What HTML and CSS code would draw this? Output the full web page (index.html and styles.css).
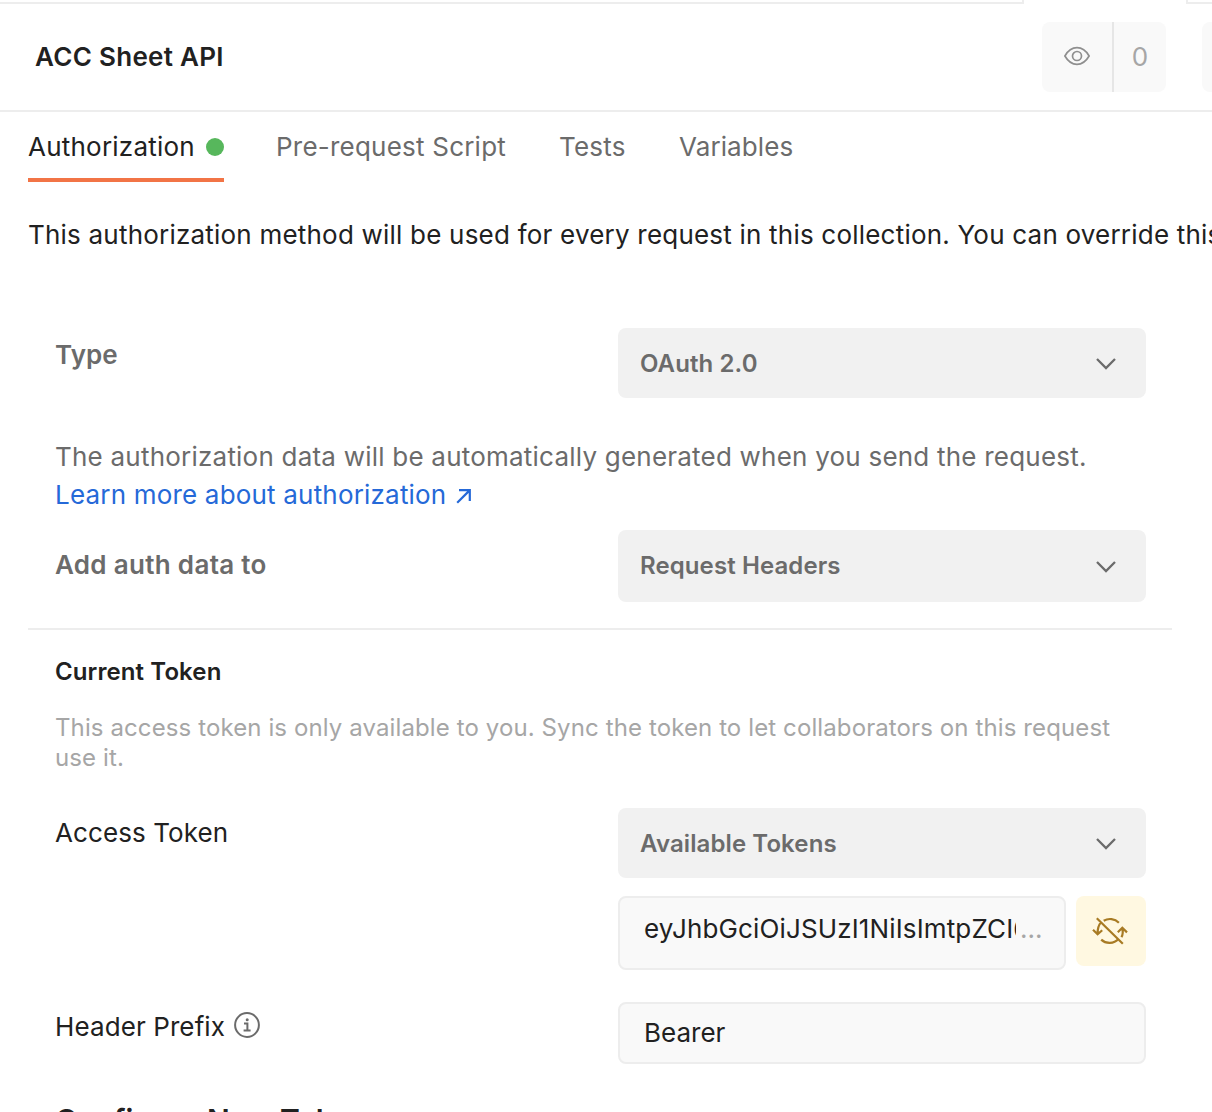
FILE: index.html
```html
<!DOCTYPE html>
<html lang="en">
<head>
<meta charset="utf-8">
<title>ACC Sheet API</title>
<link rel="stylesheet" href="styles.css">
</head>
<body>
<div class="tabstrip"><div class="strip-left"></div><div class="strip-right"></div></div>
<header class="header">
  <h1 class="title">ACC Sheet API</h1>
  <div class="actions">
    <div class="group">
      <div class="watch">
        <svg width="28" height="20" viewBox="0 0 28 20" fill="none" stroke="#8f8f8f" stroke-width="1.7"><path d="M1.9 10C5 4.6 9.200 1.700 14 1.700S23 4.600 26.100 10C23 15.400 18.800 18.300 14 18.300S5 15.400 1.900 10Z"/><circle cx="14" cy="10" r="4.500"/></svg>
      </div>
      <div class="count">0</div>
    </div>
    <div class="next-action"></div>
  </div>
</header>
<nav class="tabs">
  <div class="tab active"><span>Authorization</span><i class="dot"></i></div>
  <div class="tab t-pre">Pre-request Script</div>
  <div class="tab t-tests">Tests</div>
  <div class="tab t-vars">Variables</div>
</nav>
<p class="intro">This authorization method will be used for every request in this collection. You can override this</p>
<main class="form">
  <div class="row row-type">
    <div class="label bold l-type">Type</div>
    <div class="select"><span>OAuth 2.0</span><svg class="chev" width="22" height="14" viewBox="0 0 22 14"><path d="M2 2 11 11 20 2"/></svg></div>
  </div>
  <div class="help">
    <div>The authorization data will be automatically generated when you send the request.</div>
    <a class="link"><span>Learn more about authorization</span><svg width="16" height="16" viewBox="0 0 16 16" fill="none" stroke="#2569d8" stroke-width="2.200"><path d="M3 2.200H13.800V13M13.600 2.400 1.200 14.800"/></svg></a>
  </div>
  <div class="row row-add">
    <div class="label bold l-add">Add auth data to</div>
    <div class="select tall"><span>Request Headers</span><svg class="chev" width="22" height="14" viewBox="0 0 22 14"><path d="M2 2 11 11 20 2"/></svg></div>
  </div>
</main>
<section class="token">
  <h2 class="sub">Current Token</h2>
  <p class="note">This access token is only available to you. Sync the token to let collaborators on this request<br>use it.</p>
  <div class="row row-access">
    <div class="label">Access Token</div>
    <div class="fields">
      <div class="select"><span>Available Tokens</span><svg class="chev" width="22" height="14" viewBox="0 0 22 14"><path d="M2 2 11 11 20 2"/></svg></div>
      <div class="token-line">
        <div class="input token-input"><span class="value">eyJhbGciOiJSUzI1NiIsImtpZCI6</span><span class="dots">...</span></div>
        <div class="sync">
          <svg width="36" height="28" viewBox="0 0 36 28" fill="none" stroke="#a87b24" stroke-width="2.2"><path d="M4.800 1.200 30.800 26.800M11.700 3.700C16.400 1 22.800 1.500 26.900 5.700M9.200 22.600C13.800 27 22 27 26.400 22M8.900 5.400C6.400 8.300 5.500 12 5.600 16.700M1 12.800 5.600 17.300 10.200 13.200M29.400 20.200C30.900 17.800 31.100 14.700 30.300 11.200M25.800 15.200 30.300 10.800 35 15.400"/></svg>
        </div>
      </div>
    </div>
  </div>
  <div class="row row-prefix">
    <div class="label prefix"><span>Header Prefix</span><svg width="26" height="26" viewBox="0 0 26 26" fill="none" stroke="#6b6b6b" stroke-width="2"><circle cx="13" cy="13" r="11.900"/><path d="M10 11.600H13.400V18.200M9.600 18.500H16.600"/><circle cx="13.200" cy="7.800" r="1.500" fill="#6b6b6b" stroke="none"/></svg></div>
    <div class="input bearer">Bearer</div>
  </div>
  <h2 class="configure">Configure New Token</h2>
</section>
</body>
</html>
```
FILE: styles.css
```css
* { box-sizing: border-box; }
html, body { margin: 0; height: 1112px; overflow: hidden; }
body {
  background: #fff;
  color: #212121;
  font-family: Inter, "Liberation Sans", sans-serif;
  font-size: 26px;
  line-height: 38px;
  white-space: nowrap;
}
h1, h2, p { margin: 0; font-weight: 600; }
svg { display: block; flex: none; }

.tabstrip { display: flex; justify-content: space-between; height: 4px; }
.strip-left { width: 1024px; border: solid #ededed; border-width: 0 2px 2px 0; }
.strip-right { width: 26px; border: solid #ededed; border-width: 0 0 2px 2px; }

.header {
  display: flex;
  justify-content: space-between;
  height: 108px;
  padding: 18px 0 0 35px;
  border-bottom: 2px solid #ededed;
}
.title { font-size: 26px; line-height: 70px; letter-spacing: .3px; }
.actions { display: flex; gap: 36px; }
.group { display: flex; width: 124px; height: 70px; border-radius: 8px; background: #f9f9f9; }
.watch { display: flex; align-items: center; width: 70px; padding: 0 0 2px 21px; }
.count { flex: 1; border-left: 2px solid #e6e6e6; color: #a6a6a6; text-align: center; line-height: 69px; }
.next-action { width: 10px; height: 70px; border-radius: 8px 0 0 8px; background: #f9f9f9; }

.tabs { display: flex; height: 70px; padding-left: 28px; color: #6b6b6b; line-height: 69px; letter-spacing: .22px; }
.tab { flex: none; }
.active { display: flex; align-items: center; justify-content: space-between; width: 196px; border-bottom: 4px solid #f27446; color: #212121; }
.dot { width: 18px; height: 18px; margin-top: 4px; border-radius: 50%; background: #57b75c; }
.active span { padding-top: 2px; }
.t-pre { width: 283px; margin-left: 52px; }
.t-tests { width: 120px; }
.t-vars { letter-spacing: .1px; }
.intro { height: 146px; padding: 34px 0 0 28px; font-weight: 400; letter-spacing: .21px; }

.form { margin-left: 28px; width: 1144px; height: 302px; padding-left: 27px; border-bottom: 2px solid #ededed; }
.row { display: flex; }
.label { width: 563px; flex: none; letter-spacing: .1px; }
.bold { color: #6b6b6b; font-weight: 600; }
.l-add { letter-spacing: .31px; }
.row-type { height: 110px; }
.row-type .label { padding-top: 8px; }
.select {
  display: flex;
  align-items: center;
  justify-content: space-between;
  width: 528px;
  height: 70px;
  padding: 0 29px 0 22px;
  border-radius: 8px;
  background: #f1f1f1;
  color: #6b6b6b;
  font-size: 24px;
  font-weight: 600;
  letter-spacing: .1px;
}
.select span { padding-top: 2px; }
.tall { height: 72px; }
.tall span { padding-top: 0; }
.chev { margin-top: 2px; fill: none; stroke: #6b6b6b; stroke-width: 2.3; }
.tall .chev { margin-top: 1px; }
.help { height: 92px; color: #6b6b6b; letter-spacing: .22px; }
.link { display: flex; align-items: center; gap: 10px; color: #2569d8; letter-spacing: .19px; }
.link svg { margin-top: 2px; }
.row-add .label { padding-top: 16px; }

.token { padding-left: 55px; }
.sub { height: 83px; padding-top: 23px; font-size: 24px; letter-spacing: .1px; }
.note { height: 95px; color: #a6a6a6; font-size: 24px; font-weight: 400; line-height: 30px; letter-spacing: .11px; }
.row-access { height: 194px; }
.row-access .label { padding-top: 6px; }
.fields { display: flex; flex-direction: column; gap: 18px; }
.token-line { display: flex; gap: 10px; }
.input { border: 2px solid #ededed; border-radius: 8px; background: #f9f9f9; }
.token-input { display: flex; width: 448px; height: 74px; padding: 12px 0 0 24px; }
.value { width: 372px; overflow: hidden; letter-spacing: .14px; }
.dots { color: #a6a6a6; padding-left: 4px; }
.sync { display: flex; align-items: center; justify-content: center; width: 70px; height: 70px; padding-right: 2px; border-radius: 8px; background: #fff8e1; }
.row-prefix { height: 99px; }
.prefix { display: flex; justify-content: space-between; padding: 6px 358px 0 0; }
.prefix svg { margin-top: 4px; }
.bearer { width: 528px; height: 62px; padding: 10px 0 0 24px; }
.configure { font-size: 30px; }
```
